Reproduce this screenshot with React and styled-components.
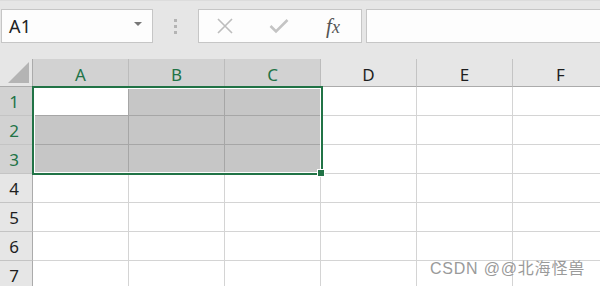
import React from "react";
import styled, { createGlobalStyle } from "styled-components";

const GlobalStyle = createGlobalStyle`
  html, body {
    margin: 0;
    padding: 0;
    background: #ffffff;
    overflow: hidden;
  }
  body {
    font-family: "Noto Sans", "Open Sans", sans-serif;
  }
`;

const columns = ["A", "B", "C", "D", "E", "F"];
const rows = [1, 2, 3, 4, 5, 6, 7];
const isSel = (r, c) => r <= 3 && c <= 2;

function App() {
  return (
    <Page>
      <GlobalStyle />
      <TopBar>
        <NameBox>
          <NameText>A1</NameText>
          <Caret />
        </NameBox>
        <Dots>
          <i />
          <i />
          <i />
        </Dots>
        <ActionBox>
          <ActionIcon>
            <svg width="18" height="16" viewBox="0 0 18 16">
              <path d="M2 1 L16 15 M16 1 L2 15" stroke="#bdbdbd" strokeWidth="1.6" fill="none" />
            </svg>
          </ActionIcon>
          <ActionIcon>
            <svg width="20" height="16" viewBox="0 0 20 16">
              <path d="M1.5 8 L7 13.5 L18.5 2" stroke="#c4c4c4" strokeWidth="2.6" fill="none" />
            </svg>
          </ActionIcon>
          <ActionIcon>
            <Fx>
              f<span>x</span>
            </Fx>
          </ActionIcon>
        </ActionBox>
        <FormulaInput />
      </TopBar>
      <Sheet>
        <Grid>
          <Corner>
            <Triangle />
          </Corner>
          {columns.map((c, i) => (
            <ColHead key={c} $sel={i <= 2}>
              {c}
            </ColHead>
          ))}
          {rows.map(r => (
            <React.Fragment key={r}>
              <RowHead $sel={r <= 3}>{r}</RowHead>
              {columns.map((c, i) => (
                <Cell
                  key={c}
                  $sel={isSel(r, i) && !(r === 1 && i === 0)}
                  $inner={isSel(r, i)}
                />
              ))}
            </React.Fragment>
          ))}
        </Grid>
        <Selection>
          <Handle />
        </Selection>
        <Watermark>CSDN @@北海怪兽</Watermark>
      </Sheet>
    </Page>
  );
}

const Page = styled.div`
  width: 600px;
  height: 286px;
  overflow: hidden;
  background: #ffffff;
`;

const TopBar = styled.div`
  height: 59px;
  box-sizing: border-box;
  background: #e6e6e6;
  border-top: 1px solid #dcdcdc;
  padding: 8px 0 0 1px;
  display: flex;
  align-items: flex-start;
`;

const Box = styled.div`
  height: 34px;
  box-sizing: border-box;
  background: #fdfdfd;
  border: 1px solid #c6c6c6;
  display: flex;
  align-items: center;
`;

const NameBox = styled(Box)`
  width: 152px;
  padding: 0 10px 0 7px;
  justify-content: space-between;
`;

const NameText = styled.span`
  font-size: 18px;
  color: #222;
  letter-spacing: 0.3px;
`;

const Caret = styled.span`
  width: 0;
  height: 0;
  border-left: 4px solid transparent;
  border-right: 4px solid transparent;
  border-top: 4px solid #777;
  margin-top: -4px;
`;

const Dots = styled.div`
  width: 45px;
  height: 34px;
  display: flex;
  flex-direction: column;
  align-items: center;
  justify-content: center;
  gap: 3px;
  i {
    display: block;
    width: 3px;
    height: 3px;
    background: #b4b4b4;
  }
`;

const ActionBox = styled(Box)`
  width: 164px;
  padding: 0 18px 0 16px;
  justify-content: space-between;
`;

const ActionIcon = styled.div`
  width: 20px;
  display: flex;
  justify-content: center;
  align-items: center;
`;

const Fx = styled.span`
  font-family: "Liberation Serif", "DejaVu Serif", serif;
  font-style: italic;
  font-size: 21px;
  color: #555;
  span {
    font-size: 18px;
  }
`;

const FormulaInput = styled(Box)`
  flex: 1;
  margin-left: 4px;
  border-right: none;
`;

const Sheet = styled.div`
  position: relative;
  height: 227px;
  overflow: hidden;
`;

const Grid = styled.div`
  display: grid;
  grid-template-columns: 33px repeat(6, 96px);
  grid-template-rows: 28px repeat(7, 29px);
  width: 609px;
`;

const Corner = styled.div`
  background: #e6e6e6;
  border-right: 1px solid #ababab;
  border-bottom: 1px solid #ababab;
  position: relative;
`;

const Triangle = styled.div`
  position: absolute;
  right: 3px;
  bottom: 3px;
  width: 0;
  height: 0;
  border-left: 21px solid transparent;
  border-bottom: 21px solid #b4b4b4;
`;

const ColHead = styled.div`
  box-sizing: border-box;
  background: ${p => (p.$sel ? "#d2d2d2" : "#e6e6e6")};
  color: ${p => (p.$sel ? "#217346" : "#1e1e1e")};
  border-right: 1px solid ${p => (p.$sel ? "#bcbcbc" : "#c4c4c4")};
  border-bottom: 1px solid #ababab;
  font-size: 17px;
  display: flex;
  align-items: center;
  justify-content: center;
  padding-top: 3px;
`;

const RowHead = styled.div`
  box-sizing: border-box;
  background: ${p => (p.$sel ? "#d2d2d2" : "#e6e6e6")};
  color: ${p => (p.$sel ? "#217346" : "#1e1e1e")};
  border-right: 1px solid #ababab;
  border-bottom: 1px solid #c4c4c4;
  font-size: 17px;
  display: flex;
  align-items: center;
  justify-content: center;
  padding-right: 4px;
`;

const Cell = styled.div`
  box-sizing: border-box;
  background: ${p => (p.$sel ? "#c6c6c6" : "#ffffff")};
  border-right: 1px solid ${p => (p.$inner ? "#a6a6a6" : "#d4d4d4")};
  border-bottom: 1px solid ${p => (p.$inner ? "#a6a6a6" : "#d4d4d4")};
`;

const Selection = styled.div`
  position: absolute;
  left: 32px;
  top: 27px;
  width: 291px;
  height: 89px;
  box-sizing: border-box;
  border: 2px solid #217346;
  box-shadow: inset 0 0 0 1px #ffffff;
  pointer-events: none;
`;

const Handle = styled.div`
  position: absolute;
  right: -4px;
  bottom: -4px;
  width: 6px;
  height: 6px;
  background: #217346;
  border: 1px solid #ffffff;
`;

const Watermark = styled.div`
  position: absolute;
  right: 15px;
  bottom: 7px;
  font-family: "Liberation Sans", "Noto Sans CJK SC", sans-serif;
  font-size: 16px;
  color: #9a9a9a;
  letter-spacing: 0.8px;
`;

export default App;
